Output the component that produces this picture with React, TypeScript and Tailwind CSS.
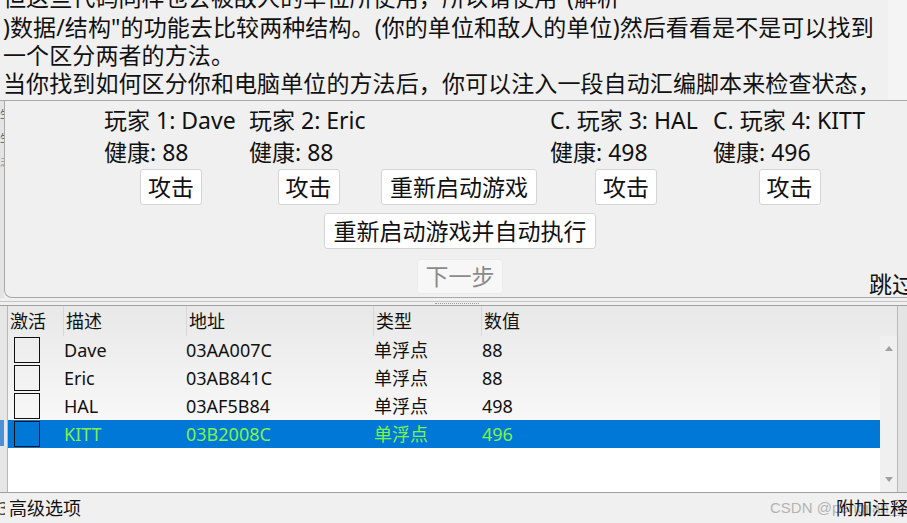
import React from "react";

const FONT = "font-['Noto_Sans','Noto_Sans_CJK_SC',sans-serif]";

function Btn({ children, className = "" }: { children: React.ReactNode; className?: string }) {
  return (
    <div
      className={`h-[36px] shrink-0 flex items-center justify-center bg-white border border-[#d4d4d4] rounded-[3px] text-[23px] text-[#111] ${className}`}
    >
      {children}
    </div>
  );
}

function Player({ label, hp, w, ml = "" }: { label: string; hp: string; w: string; ml?: string }) {
  return (
    <div className={`flex flex-col shrink-0 ${w} ${ml}`}>
      <div className="h-[32px] leading-[32px] whitespace-nowrap">{label}</div>
      <div className="h-[32px] leading-[32px] whitespace-nowrap">{hp}</div>
      <div className="flex justify-center mt-[1px]">
        <Btn className="w-[62px]">攻击</Btn>
      </div>
    </div>
  );
}

const rows = [
  { d: "Dave", a: "03AA007C", t: "单浮点", v: "88", sel: false },
  { d: "Eric", a: "03AB841C", t: "单浮点", v: "88", sel: false },
  { d: "HAL", a: "03AF5B84", t: "单浮点", v: "498", sel: false },
  { d: "KITT", a: "03B2008C", t: "单浮点", v: "496", sel: true },
];

export default function App() {
  return (
    <div className={`w-[907px] h-[523px] bg-[#f0f0f0] overflow-hidden relative text-[#111] ${FONT}`}>
      {/* top description text */}
      <div className="h-[101px] flex border-b border-[#a8a8a8] overflow-hidden">
        <div className="w-[888px] overflow-hidden bg-[#f0f0f0]">
          <div className="-mt-[17px] pl-[3px] text-[23px] leading-[28px] whitespace-nowrap tracking-[0.1px]">
            <div>但这些代码同样也会被敌人的单位所使用，所以请使用"(解析</div>
            <div className="mt-[2px]">)数据/结构"的功能去比较两种结构。(你的单位和敌人的单位)然后看看是不是可以找到</div>
            <div>一个区分两者的方法。</div>
            <div>当你找到如何区分你和电脑单位的方法后，你可以注入一段自动汇编脚本来检查状态，</div>
          </div>
        </div>
        <div className="flex-1 bg-[#f4f4f4]" />
      </div>

      {/* game panel */}
      <div className="h-[197px] flex">
        <div className="w-[4px] bg-[#e4e4e4] flex flex-col gap-[14px] pt-[8px] text-[10px] leading-[10px] text-[#555] overflow-hidden">
          <span>生</span>
          <span>生</span>
          <span className="text-[#999]">乏</span>
        </div>
        <div className="flex-1 bg-[#f0f0f0] border-l border-b border-[#a8a8a8] rounded-bl-[8px] overflow-hidden text-[23px]">
          <div className="flex pt-[3px] pl-[99px]">
            <Player label="玩家 1: Dave" hp="健康: 88" w="w-[134px]" />
            <Player label="玩家 2: Eric" hp="健康: 88" w="w-[119px]" ml="ml-[11px]" />
            <div className="w-[182px] shrink-0 flex flex-col">
              <div className="h-[64px]" />
              <div className="flex justify-center mt-[1px]">
                <Btn className="w-[156px]">重新启动游戏</Btn>
              </div>
            </div>
            <Player label="C. 玩家 3: HAL" hp="健康: 498" w="w-[152px]" />
            <Player label="C. 玩家 4: KITT" hp="健康: 496" w="w-[153px]" ml="ml-[11px]" />
          </div>
          <div className="flex mt-[8px] pl-[319px]">
            <Btn className="w-[272px]">重新启动游戏并自动执行</Btn>
          </div>
          <div className="flex mt-[10px]">
            <div className="ml-[412px] shrink-0 w-[86px] h-[35px] flex items-center justify-center bg-[#f7f7f7] rounded-[3px] text-[#8a8a8a] border border-[#ececec]">
              下一步
            </div>
            <div className="ml-[366px] shrink-0 mt-[11px] h-[28px] leading-[28px] whitespace-nowrap">跳过</div>
          </div>
        </div>
      </div>

      {/* splitter */}
      <div className="h-[8px] relative border-b border-[#a0a0a0]">
        <div className="absolute left-0 right-0 top-[3px] h-px bg-[#c4c4c4]" />
        <div className="absolute left-[435px] top-[5px] w-[44px] h-[1px] border-t border-dotted border-[#9a9a9a]" />
      </div>

      {/* list */}
      <div className="flex h-[186px]">
        <div className="w-[7px] bg-[#e6e6e6] relative">
          <div className="absolute left-0 top-[114px] w-[4px] h-[26px] bg-[#4a8fd8]" />
        </div>
        <div className="w-[891px] border-l border-r border-[#b8b8b8] bg-[linear-gradient(to_bottom,#e8e8e8,#fafafa_70%,#ffffff)] flex flex-col text-[18px] relative">
          {/* header */}
          <div className="h-[30px] flex items-center">
            <div className="w-[55px] pl-[2px]">激活</div>
            <div className="w-[123px] h-full flex items-center border-l border-[#d8d8d8] pl-[2px]">描述</div>
            <div className="w-[187px] h-full flex items-center border-l border-[#d8d8d8] pl-[2px]">地址</div>
            <div className="w-[108px] h-full flex items-center border-l border-[#d8d8d8] pl-[2px]">类型</div>
            <div className="h-full flex items-center border-l border-[#d8d8d8] pl-[2px]">数值</div>
          </div>
          <div className="flex flex-1">
            <div className="flex-1 flex flex-col">
              {rows.map((r) => (
                <div
                  key={r.d}
                  className={`h-[28px] flex items-center ${r.sel ? "bg-[#0078d7] text-[#7ff24a]" : ""}`}
                >
                  <div className="w-[56px] h-full flex items-center">
                    <div className="ml-[6px] w-[26px] h-[26px] border-[1.5px] border-[#111]" />
                  </div>
                  <div className="w-[122px]">{r.d}</div>
                  <div className="w-[188px]">{r.a}</div>
                  <div className="w-[108px]">{r.t}</div>
                  <div>{r.v}</div>
                </div>
              ))}
              <div className="flex-1 bg-white" />
            </div>
            {/* scrollbar */}
            <div className="w-[17px] bg-[#f0f0f0] flex flex-col items-center justify-between py-[10px]">
              <div className="w-0 h-0 border-l-[4px] border-r-[4px] border-b-[5px] border-l-transparent border-r-transparent border-b-[#a0a0a0]" />
              <div className="w-0 h-0 border-l-[4px] border-r-[4px] border-t-[5px] border-l-transparent border-r-transparent border-t-[#a0a0a0]" />
            </div>
          </div>
        </div>
        <div className="flex-1 bg-[#e4e4e4]" />
      </div>

      {/* bottom bar */}
      <div className="h-[31px] border-t border-[#a0a0a0] flex items-center text-[18px] relative">
        <span className="text-[#444] w-[7px] overflow-hidden -ml-[2px] mr-[4px]">3</span>
        <span>高级选项</span>
        <span className="absolute left-[770px] top-[4px] text-[15px] text-[#b4b4b4] font-['Liberation_Sans',sans-serif] whitespace-nowrap">
          CSDN @pengjian_yc
        </span>
        <span className="absolute left-[836px] top-[2px] text-[18px] whitespace-nowrap">附加注释</span>
      </div>
    </div>
  );
}
